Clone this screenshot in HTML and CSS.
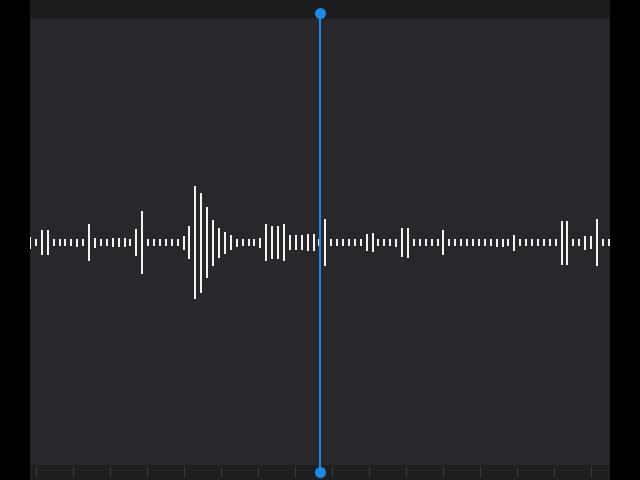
FILE: index.html
```html
<!DOCTYPE html>
<html lang="en">
<head>
  <meta charset="UTF-8" />
  <title>Waveform</title>
  <meta name="viewport" content="width=device-width, initial-scale=1.0" />
  <link rel="stylesheet" href="styles.css">
</head>
<body>
  <div class="screen">
    <div class="topbar"></div>
    <div class="wave">
      <div class="bars" id="bars"></div>
    </div>
    <div class="ruler" id="ruler"></div>

    <div class="playhead">
      <span class="knob knob-top"></span>
      <span class="knob knob-bottom"></span>
    </div>
  </div>

  <script>
    // bar heights in px, left to right
    const heights = [
      12, 7, 25, 25, 7, 7, 7, 7, 8, 7,
      37, 10, 7, 7, 9, 9, 9, 7, 27, 63,
      7, 7, 7, 7, 7, 7, 14, 33, 113, 100,
      71, 46, 30, 22, 15, 8, 7, 7, 7, 10,
      37, 33, 33, 37, 15, 15, 15, 17, 17, 7,
      47, 7, 7, 7, 7, 7, 7, 17, 19, 7,
      7, 7, 8, 29, 30, 7, 7, 7, 7, 7,
      25, 7, 7, 7, 7, 7, 7, 7, 7, 8,
      8, 7, 16, 7, 7, 7, 7, 7, 7, 7,
      44, 44, 7, 7, 14, 13, 47, 7, 7
    ];

    const bars = document.getElementById("bars");
    heights.forEach(h => {
      const bar = document.createElement("div");
      bar.classList.add("bar");
      bar.style.height = h + "px";
      bars.appendChild(bar);
    });

    const ruler = document.getElementById("ruler");
    for (let i = 0; i < 16; i++) {
      const tick = document.createElement("div");
      tick.classList.add("tick");
      ruler.appendChild(tick);
    }
  </script>
</body>
</html>
```

FILE: styles.css
```css
:root {
  --bg: #000;
  --panel: #28282c;
  --top: #1c1c1e;
  --ruler: #1f1f21;
  --tick: #3c3c40;
  --bar: #f2f2f2;
  --blue: #1e88e5;
}

html, body {
  margin: 0;
  padding: 0;
  height: 100%;
  background: var(--bg);
}

.screen {
  position: relative;
  margin: 0 30px;
  height: 480px;
  display: flex;
  flex-direction: column;
  background: var(--panel);
}

.topbar {
  height: 18px;
  background: var(--top);
  box-shadow: 0 1px 1px rgba(0, 0, 0, 0.15);
}

.wave {
  flex: 1;
  padding-top: 2px;
  display: flex;
  align-items: center;
  overflow: hidden;
}

.bars {
  display: flex;
  align-items: center;
  gap: 3.91px;
  margin-left: -1px;
}

.bar {
  flex: none;
  width: 2px;
  background: var(--bar);
}

.ruler {
  height: 15px;
  background: var(--ruler);
  display: flex;
  align-items: flex-start;
  gap: 36px;
  padding: 2px 0 0 6px;
  box-sizing: border-box;
}

.tick {
  flex: none;
  width: 1px;
  height: 10px;
  background: var(--tick);
}

/* playhead sits over the waveform */
.playhead {
  position: absolute;
  top: 13px;
  bottom: 8px;
  left: 289px;
  width: 2px;
  background: var(--blue);
}

.knob {
  position: absolute;
  left: -4.5px;
  width: 11px;
  height: 11px;
  border-radius: 50%;
  background: var(--blue);
}

.knob-top {
  top: -5.5px;
}

.knob-bottom {
  bottom: -5.5px;
}
```
